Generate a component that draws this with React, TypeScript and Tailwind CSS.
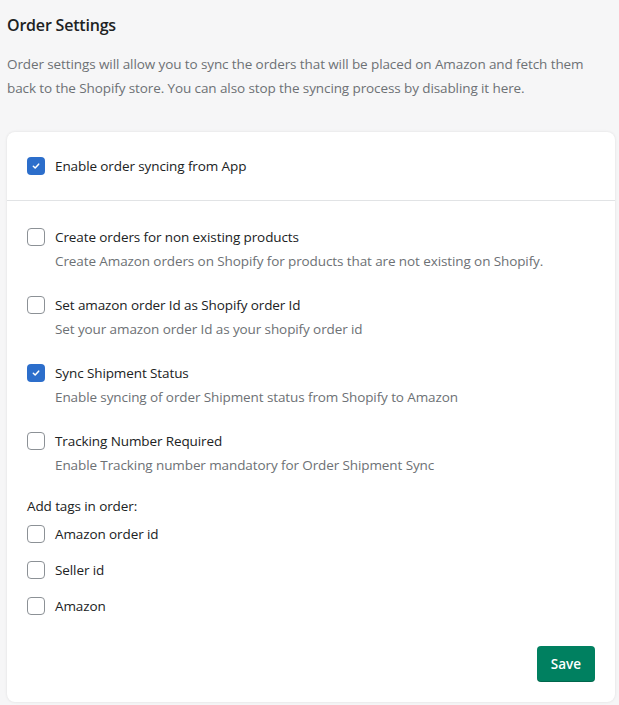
import { useState } from "react";

type Option = { id: string; label: string; help?: string; checked: boolean };

const initialOptions: Option[] = [
  { id: "nonExisting", label: "Create orders for non existing products", help: "Create Amazon orders on Shopify for products that are not existing on Shopify.", checked: false },
  { id: "orderId", label: "Set amazon order Id as Shopify order Id", help: "Set your amazon order Id as your shopify order id", checked: false },
  { id: "shipment", label: "Sync Shipment Status", help: "Enable syncing of order Shipment status from Shopify to Amazon", checked: true },
  { id: "tracking", label: "Tracking Number Required", help: "Enable Tracking number mandatory for Order Shipment Sync", checked: false },
];

const initialTags: Option[] = [
  { id: "amazonOrderId", label: "Amazon order id", checked: false },
  { id: "sellerId", label: "Seller id", checked: false },
  { id: "amazon", label: "Amazon", checked: false },
];

function Checkbox({ checked, onChange }: { checked: boolean; onChange: () => void }) {
  return (
    <button
      type="button"
      onClick={onChange}
      className={`flex h-[18px] w-[18px] shrink-0 items-center justify-center rounded-[4px] ${checked ? "bg-[#2c6ecb]" : "border-[1.5px] border-[#8c9196] bg-white"}`}
    >
      {checked && (
        <svg viewBox="0 0 12 12" className="h-[10px] w-[10px]" fill="none" stroke="white" strokeWidth="1.8" strokeLinecap="round" strokeLinejoin="round">
          <path d="M2.8 6.3 5 8.4 9.2 3.8" />
        </svg>
      )}
    </button>
  );
}

function Row({ item, onToggle }: { item: Option; onToggle: () => void }) {
  return (
    <div className="flex gap-[10px]">
      <div className="pt-[3px]">
        <Checkbox checked={item.checked} onChange={onToggle} />
      </div>
      <div>
        <p className="text-[13.5px] leading-6 tracking-[-0.1px] text-[#202223]">{item.label}</p>
        {item.help && <p className="text-[13.5px] leading-6 tracking-[-0.1px] text-[#6d7175]">{item.help}</p>}
      </div>
    </div>
  );
}

export default function App() {
  const [enabled, setEnabled] = useState(true);
  const [options, setOptions] = useState(initialOptions);
  const [tags, setTags] = useState(initialTags);

  const toggle = (list: Option[], id: string) => list.map((o) => (o.id === id ? { ...o, checked: !o.checked } : o));

  return (
    <div className="min-h-[705px] bg-[#f6f6f7] pl-[7px] pr-[4px] pt-[13px] font-['Segoe_UI','Open_Sans',sans-serif]">
      <h2 className="text-[16px] font-semibold leading-6 tracking-[-0.2px] text-[#202223]">Order Settings</h2>
      <p className="mt-[15px] text-[13.5px] leading-6 tracking-[-0.1px] text-[#6d7175]">
        Order settings will allow you to sync the orders that will be placed on Amazon and fetch them back to the Shopify store. You can also stop the syncing process by disabling it here.
      </p>

      <div className="mt-[32px] rounded-[8px] bg-white shadow-[0_0_3px_rgba(0,0,0,0.1)]">
        <div className="border-b border-[#e1e3e5] px-5 pb-[22px] pt-[22px]">
          <Row item={{ id: "enable", label: "Enable order syncing from App", checked: enabled }} onToggle={() => setEnabled(!enabled)} />
        </div>

        <div className="px-5 pb-5 pt-[24px]">
          <div className="flex flex-col gap-5">
            {options.map((o) => (
              <Row key={o.id} item={o} onToggle={() => setOptions(toggle(options, o.id))} />
            ))}
          </div>

          <p className="mt-[17px] text-[13.5px] leading-6 tracking-[-0.1px] text-[#202223]">Add tags in order:</p>
          <div className="mt-[4px] flex flex-col gap-3">
            {tags.map((t) => (
              <Row key={t.id} item={t} onToggle={() => setTags(toggle(tags, t.id))} />
            ))}
          </div>

          <div className="mt-[28px] flex justify-end">
            <button type="button" className="h-9 rounded-[4px] bg-[#008060] px-[14px] text-[13.5px] font-semibold text-white shadow-[inset_0_-1px_0_rgba(0,0,0,0.2)]">
              Save
            </button>
          </div>
        </div>
      </div>
    </div>
  );
}
